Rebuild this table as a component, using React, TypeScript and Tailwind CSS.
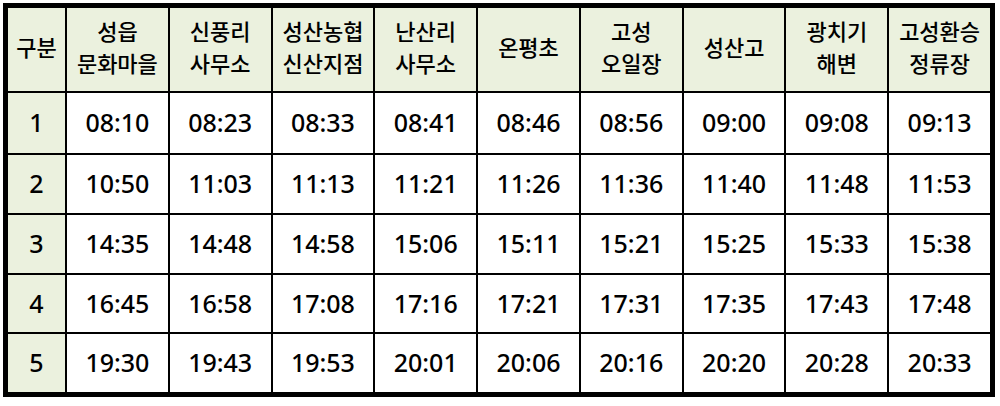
import React from 'react'

const stops = [
  ['성읍', '문화마을'],
  ['신풍리', '사무소'],
  ['성산농협', '신산지점'],
  ['난산리', '사무소'],
  ['온평초'],
  ['고성', '오일장'],
  ['성산고'],
  ['광치기', '해변'],
  ['고성환승', '정류장'],
]

const rows = [
  ['08:10', '08:23', '08:33', '08:41', '08:46', '08:56', '09:00', '09:08', '09:13'],
  ['10:50', '11:03', '11:13', '11:21', '11:26', '11:36', '11:40', '11:48', '11:53'],
  ['14:35', '14:48', '14:58', '15:06', '15:11', '15:21', '15:25', '15:33', '15:38'],
  ['16:45', '16:58', '17:08', '17:16', '17:21', '17:31', '17:35', '17:43', '17:48'],
  ['19:30', '19:43', '19:53', '20:01', '20:06', '20:16', '20:20', '20:28', '20:33'],
]

export default function App() {
  return (
    <div
      className="w-[1000px] h-[406px] bg-white pl-[3px] pt-[3px]"
      style={{ fontFamily: '"Noto Sans", "Noto Sans CJK KR", sans-serif' }}
    >
      <div className="w-[992px] h-[394px] border-[5px] border-black bg-black">
        <div className="grid h-full grid-cols-[57px_repeat(9,1fr)] grid-rows-[83px_60px_repeat(4,1fr)] gap-[2px] text-black">
          <div className="flex items-center justify-center bg-[#ebf1de] pb-[4px] text-[22px] font-medium">구분</div>
          {stops.map((s, i) => (
            <div
              key={i}
              className="flex flex-col items-center justify-center bg-[#ebf1de] pb-[6px] text-[22px] font-medium leading-[32px]"
            >
              {s.map((line, j) => (
                <span key={j}>{line}</span>
              ))}
            </div>
          ))}
          {rows.map((r, i) => (
            <React.Fragment key={i}>
              <div className="flex items-center justify-center bg-[#ebf1de] text-[25px] font-medium">{i + 1}</div>
              {r.map((t, j) => (
                <div key={j} className="flex items-center justify-center bg-white text-[25px] font-medium">
                  {t}
                </div>
              ))}
            </React.Fragment>
          ))}
        </div>
      </div>
    </div>
  )
}
